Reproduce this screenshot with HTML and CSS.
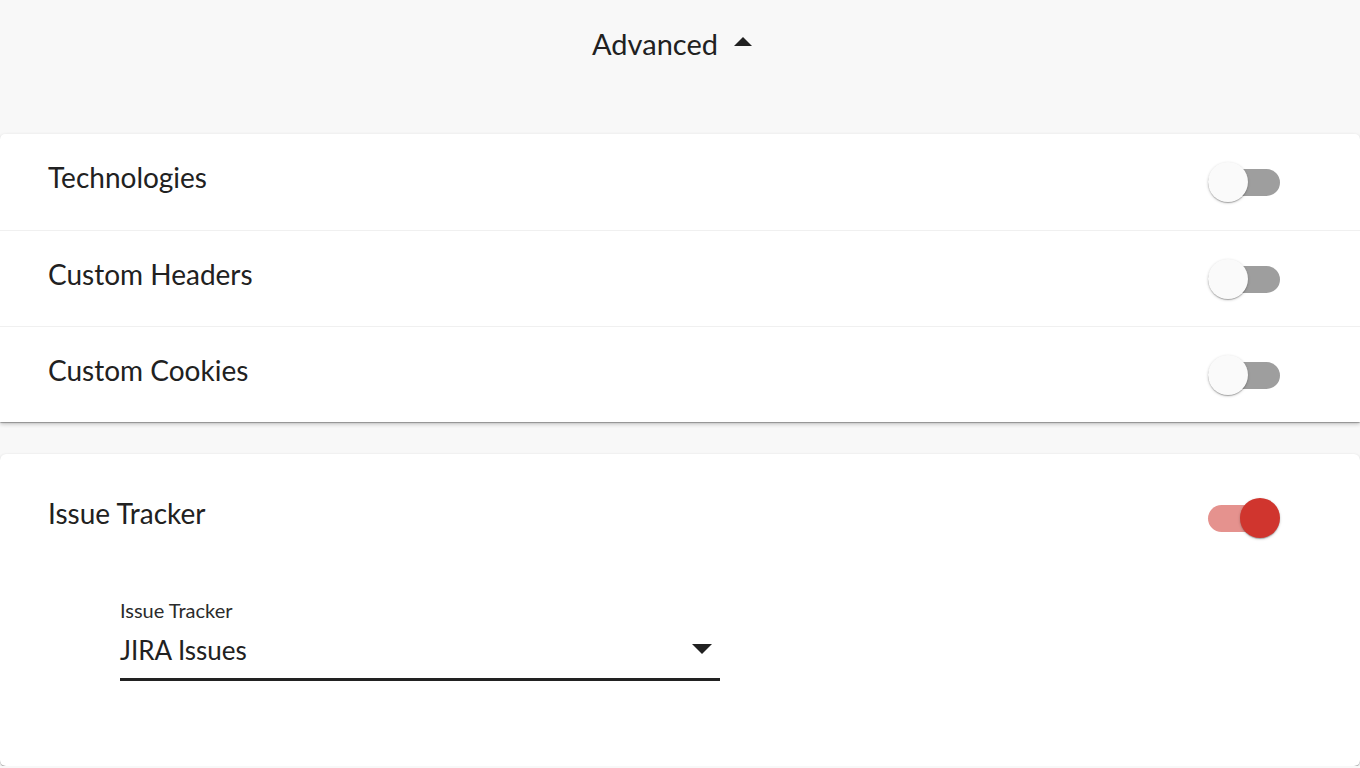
FILE: index.html
```html
<!DOCTYPE html>
<html lang="en">
<head>
    <meta charset="UTF-8">
    <meta name="viewport" content="width=device-width, initial-scale=1.0">
    <title>Advanced settings</title>
    <link rel="stylesheet" href="styles.css">
</head>
<body>
    <div class="section-toggle">
        <span>Advanced</span>
        <svg class="caret" width="18" height="10" viewBox="0 0 18 10"><polygon points="0,10 9,1 18,10" fill="#212121"/></svg>
    </div>

    <div class="panel-group">
        <div class="panel">
            <span class="panel-title">Technologies</span>
            <span class="switch"><span class="track"></span><span class="thumb"></span></span>
        </div>
        <div class="panel">
            <span class="panel-title">Custom Headers</span>
            <span class="switch"><span class="track"></span><span class="thumb"></span></span>
        </div>
        <div class="panel">
            <span class="panel-title">Custom Cookies</span>
            <span class="switch"><span class="track"></span><span class="thumb"></span></span>
        </div>
    </div>

    <div class="card">
        <div class="panel">
            <span class="panel-title">Issue Tracker</span>
            <span class="switch on"><span class="track"></span><span class="thumb"></span></span>
        </div>
        <div class="field">
            <label class="field-label">Issue Tracker</label>
            <div class="select">
                <span>JIRA Issues</span>
                <svg width="20" height="10" viewBox="0 0 20 10"><polygon points="0,0 20,0 10,10" fill="#212121"/></svg>
            </div>
        </div>
    </div>
</body>
</html>
```

FILE: styles.css
```css
body {
    margin: 0;
    background: #f8f8f8;
    font-family: Lato, "Open Sans", sans-serif;
    color: #212121;
}
.section-toggle {
    height: 86px;
    display: flex;
    justify-content: center;
    align-items: center;
    gap: 16px;
    font-size: 29px;
    margin-bottom: 48px;
    padding-right: 16px;
}
.caret {
    margin-bottom: 4px;
}
.panel-group {
    background: #fff;
    border-radius: 5px 5px 0 0;
    box-shadow: 0 2px 4px rgba(0,0,0,.22), 0 1px 1px rgba(0,0,0,.2), 0 2px 1px -1px rgba(0,0,0,.12);
}
.panel {
    height: 96px;
    display: flex;
    align-items: center;
    justify-content: space-between;
    padding: 0 80px 0 48px;
}
.panel-group .panel + .panel {
    border-top: 1px solid #f0f0f0;
    height: 95px;
}
.panel-title {
    font-size: 28px;
    margin-top: -10px;
}
.switch {
    position: relative;
    width: 72px;
    height: 42px;
}
.track {
    position: absolute;
    left: 0;
    top: 8px;
    width: 72px;
    height: 27px;
    border-radius: 14px;
    background: #9e9e9e;
}
.thumb {
    position: absolute;
    left: 0;
    top: 1px;
    width: 40px;
    height: 40px;
    border-radius: 50%;
    background: #fafafa;
    box-shadow: 0 1px 3px rgba(0,0,0,.2), 0 1px 1px rgba(0,0,0,.14), 0 2px 1px -1px rgba(0,0,0,.12);
}
.switch.on .track {
    width: 60px;
    background: #e5928e;
}
.switch.on .thumb {
    left: 32px;
    background: #d0352e;
}
.card {
    margin-top: 32px;
    background: #fff;
    border-radius: 6px;
    height: 312px;
    box-shadow: 0 1px 3px rgba(0,0,0,.2), 0 1px 1px rgba(0,0,0,.14), 0 2px 1px -1px rgba(0,0,0,.12);
    padding-top: 12px;
    box-sizing: border-box;
}
.card .panel {
    height: 104px;
}
.field {
    margin: 28px 0 0 120px;
    width: 600px;
}
.field-label {
    display: block;
    font-size: 20px;
    line-height: 24px;
    color: #2b2b2b;
}
.select {
    display: flex;
    align-items: center;
    justify-content: space-between;
    height: 59px;
    border-bottom: 3px solid #222;
    font-size: 26px;
    padding-right: 8px;
    box-sizing: border-box;
}
.select svg {
    margin-top: -2px;
}
```
